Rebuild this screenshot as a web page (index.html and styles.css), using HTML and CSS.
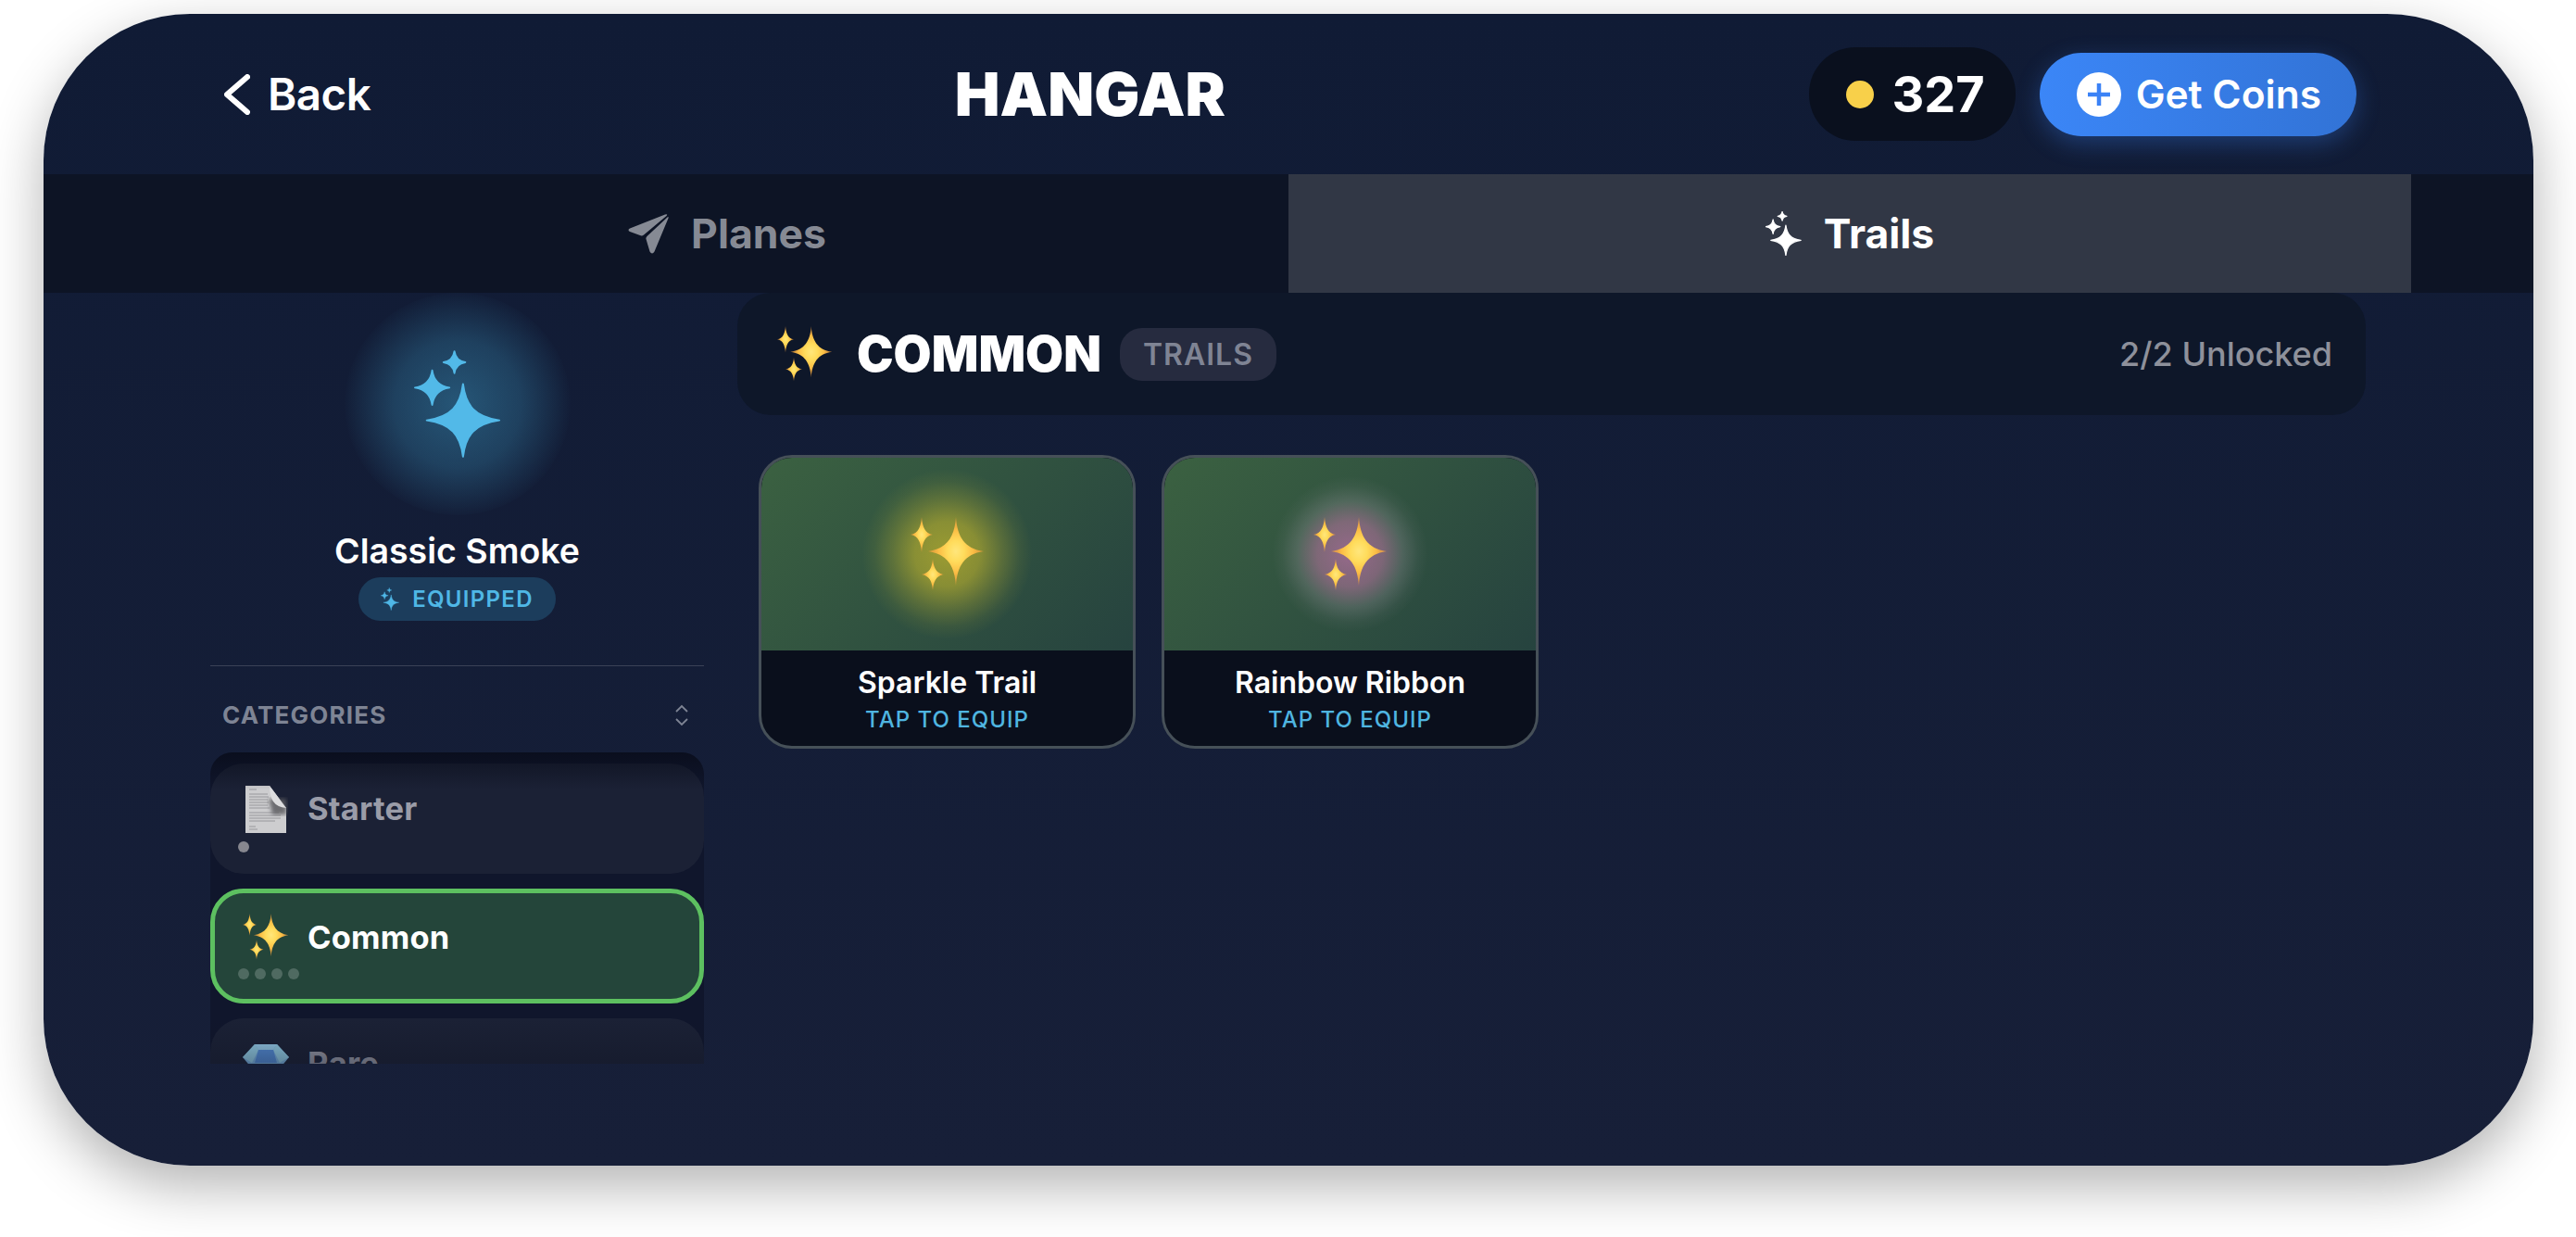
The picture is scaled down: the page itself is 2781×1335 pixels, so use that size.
FILE: index.html
```html
<!DOCTYPE html>
<html lang="en">

<head>
  <meta charset="UTF-8">
  <meta name="viewport" content="width=device-width, initial-scale=1.0">
  <title>Hangar</title>

  <link rel="stylesheet" href="styles.css">
</head>

<body>
  <svg class="defs" aria-hidden="true">
    <defs>
      <radialGradient id="gold">
        <stop offset="0" stop-color="#ffe67c" />
        <stop offset="0.3" stop-color="#ffdc5c" />
        <stop offset="0.62" stop-color="#fbbd45" />
        <stop offset="1" stop-color="#f39a3c" stop-opacity="0.65" />
      </radialGradient>
      <filter id="soft">
        <feGaussianBlur stdDeviation="2" />
      </filter>
      <symbol id="sparkles" viewBox="-1 -1 96 118">
        <path d="M53 36C56 60 66 72 93 76C66 80 56 92 53 116C50 92 40 80 13 76C40 72 50 60 53 36Z" />
        <path d="M19 21C20.5 32 26 38 38 40C26 42 20.5 48 19 59C17.5 48 12 42 0 40C12 38 17.5 32 19 21Z" />
        <path d="M43.5 0C44.5 7 48 11 55.5 12C48 13 44.5 17 43.5 24C42.5 17 39 13 31.5 12C39 11 42.5 7 43.5 0Z" />
      </symbol>
      <symbol id="emoji-sparkles" viewBox="0 0 80 80">
        <path fill="url(#gold)" d="M49 0C50.5 21 58 34 79 37C58 40 50.5 53 49 74C47.5 53 40 40 19 37C40 34 47.5 21 49 0Z" />
        <path fill="url(#gold)" d="M12 0C13 11 15.500 17.500 24 19C15.500 20.500 13 27 12 38C11 27 8.500 20.500 0 19C8.500 17.500 11 11 12 0Z" />
        <path fill="url(#gold)" d="M24 45C25 55 27.500 60.500 36 62C27.500 63.500 25 69 24 79C23 69 20.500 63.500 12 62C20.500 60.500 23 55 24 45Z" />
      </symbol>
    </defs>
  </svg>

  <div class="device">
    <header class="topbar">
      <a class="back">
        <svg class="back-icon" viewBox="0 0 28 44">
          <path d="M25 3L3 22L25 41" />
        </svg>
        Back
      </a>
      <h1>HANGAR</h1>
      <div class="wallet">
        <div class="coins">
          <span class="coin-dot"></span>
          327
        </div>
        <button class="get-coins">
          <svg class="plus-icon" viewBox="0 0 48 48">
            <circle cx="24" cy="24" r="24" fill="#fff" />
            <path d="M24 12V36M12 24H36" />
          </svg>
          Get Coins
        </button>
      </div>
    </header>

    <nav class="tabs">
      <a class="tab">
        <svg class="plane-icon" viewBox="0 0 44 44">
          <path d="M40 1.500Q43.500 .5 41.500 3L17 23.500Q15 25 13 24L2 20Q-1 18 2 16.500Z" />
          <path d="M42.500 4.500Q44 3 43.500 5.500L28.500 41.500Q26 45.500 23.500 41.500L19.500 28Q19 26.500 20.500 25Z" />
        </svg>
        Planes
      </a>
      <a class="tab active">
        <svg class="tab-sparkles">
          <use href="#sparkles" />
        </svg>
        Trails
      </a>
    </nav>

    <div class="content">
      <aside class="sidebar">
        <div class="preview">
          <svg class="preview-sparkles">
            <use href="#sparkles" />
          </svg>
        </div>
        <div class="equipped-name">Classic Smoke</div>
        <div class="equipped-badge">
          <svg class="badge-sparkles">
            <use href="#sparkles" />
          </svg>
          EQUIPPED
        </div>

        <div class="categories-head">
          <span>CATEGORIES</span>
          <svg class="updown" viewBox="0 0 16 24">
            <path d="M2 8L8 2L14 8M2 16L8 22L14 16" />
          </svg>
        </div>

        <div class="category-list">
          <div class="category">
            <div class="category-row">
              <svg class="doc-icon" viewBox="0 0 44 51">
                <path d="M0 0H26L44 24V51H0Z" fill="#cdcdcf" />
                <path d="M4 4H12M4 9H24M4 12H25M4 15H24M4 18H25M4 21H24M4 24H26M4 29H36M4 32H38M4 35H38M4 38H32M4 44H11M4 47H13" stroke="#98989c" stroke-width="1" />
                <path d="M25 14H44V31H29Z" fill="#5c5c60" opacity="0.85" filter="url(#soft)" />
                <path d="M26 0L44 24Q34 23 30 17Q26 11 26 0Z" fill="#dcdcde" />
              </svg>
              <span>Starter</span>
            </div>
            <div class="dots">
              <i></i>
            </div>
          </div>

          <div class="category selected">
            <div class="category-row">
              <svg class="list-sparkles">
                <use href="#emoji-sparkles" />
              </svg>
              <span>Common</span>
            </div>
            <div class="dots">
              <i></i><i></i><i></i><i></i>
            </div>
          </div>

          <div class="category">
            <div class="category-row">
              <svg class="gem-icon" viewBox="0 0 50 44">
                <path d="M13 0H37L50 14L25 44L0 14Z" fill="#7cb6e4" />
                <path d="M13 0L17 6H33L37 0Z" fill="#9ad2f0" />
                <path d="M13 0L0 14L10 20L17 6ZM37 0L50 14L40 20L33 6Z" fill="#96d2ea" />
                <path d="M17 6H33L37 20H13Z" fill="#558fda" />
              </svg>
              <span>Rare</span>
            </div>
          </div>
        </div>
      </aside>

      <main class="main">
        <div class="section-head">
          <svg class="section-sparkles">
            <use href="#emoji-sparkles" />
          </svg>
          <h2>COMMON</h2>
          <span class="section-tag">TRAILS</span>
          <span class="section-count">2/2 Unlocked</span>
        </div>

        <div class="cards">
          <div class="card">
            <div class="card-art glow-yellow">
              <svg class="card-sparkles">
                <use href="#emoji-sparkles" />
              </svg>
            </div>
            <div class="card-info">
              <div class="card-name">Sparkle Trail</div>
              <div class="card-action">TAP TO EQUIP</div>
            </div>
          </div>

          <div class="card">
            <div class="card-art glow-pink">
              <svg class="card-sparkles">
                <use href="#emoji-sparkles" />
              </svg>
            </div>
            <div class="card-info">
              <div class="card-name">Rainbow Ribbon</div>
              <div class="card-action">TAP TO EQUIP</div>
            </div>
          </div>
        </div>
      </main>
    </div>
  </div>
</body>

</html>
```

FILE: styles.css
```css
* {
  box-sizing: border-box;
}

html,
body {
  margin: 0;
  padding: 0;
  height: 100%;
  background-color: #fff;
  font-family: 'Inter', 'Liberation Sans', sans-serif;
}

body {
  overflow: hidden;
  padding: 15px 0 0 47px;
}

.defs {
  position: absolute;
  width: 0;
  height: 0;
}

.device {
  display: flex;
  flex-direction: column;

  width: 2688px;
  height: 1243px;

  overflow: hidden;
  border-radius: 158px;
  background: linear-gradient(180deg, #101b35 0%, #171f38 100%);
  box-shadow: 0 22px 60px rgba(0, 0, 0, 0.3);
  color: #fff;
}

/* top bar */

.topbar {
  display: flex;
  justify-content: space-between;
  align-items: center;

  height: 173px;
  flex-shrink: 0;
  padding: 0 191px 0 195px;
}

.back {
  display: flex;
  align-items: center;
  gap: 19px;

  font-size: 47.500px;
  font-weight: 600;
  letter-spacing: -0.5px;
}

.back-icon {
  width: 28px;
  height: 44px;
  fill: none;
  stroke: #fff;
  stroke-width: 6;
  stroke-linecap: round;
  stroke-linejoin: round;
}

h1 {
  margin: 0;
  font-size: 65px;
  font-weight: 900;
}

.wallet {
  display: flex;
  align-items: center;
  gap: 26px;
}

.coins {
  display: flex;
  align-items: center;
  gap: 19px;

  height: 101px;
  padding: 0 33px 0 40px;

  border-radius: 50px;
  background-color: #0a101e;

  font-size: 54px;
  font-weight: 700;
}

.coin-dot {
  width: 30px;
  height: 30px;
  border-radius: 50%;
  background-color: #f8d04a;
}

.get-coins {
  display: flex;
  align-items: center;
  gap: 16px;

  height: 90px;
  padding: 0 38px 0 40px;

  border: none;
  border-radius: 45px;
  background: linear-gradient(90deg, #3b86f7 0%, #3273d6 100%);
  box-shadow: 0 8px 26px rgba(59, 130, 246, 0.32);

  color: #fff;
  font-family: inherit;
  font-size: 42.500px;
  font-weight: 600;
}

.plus-icon {
  width: 48px;
  height: 48px;
}

.plus-icon path {
  fill: none;
  stroke: #3b82f6;
  stroke-width: 4.5;
}

/* tabs */

.tabs {
  display: flex;
  flex-shrink: 0;

  height: 128px;
  padding: 0 132px;
  background-color: #0d1425;
}

.tab {
  flex: 1;

  display: flex;
  justify-content: center;
  align-items: center;
  gap: 24px;

  color: #868a94;
  font-size: 44.500px;
  font-weight: 700;
}

.tab.active {
  background-color: #313745;
  color: #fff;
}

.plane-icon {
  width: 44px;
  height: 44px;
  fill: #868a94;
}

.tab-sparkles {
  width: 39px;
  height: 48px;
  fill: #fff;
  stroke: #fff;
  stroke-width: 3;
  stroke-linejoin: round;
}

/* sidebar */

.content {
  flex: 1;
  display: flex;
  gap: 36px;
  padding: 0 181px 0 180px;
  min-height: 0;
}

.sidebar {
  display: flex;
  flex-direction: column;
  align-items: center;

  width: 533px;
  flex-shrink: 0;
}

.preview {
  display: flex;
  justify-content: center;
  align-items: center;

  width: 244px;
  height: 240px;
  flex-shrink: 0;

  border-radius: 50%;
  background: radial-gradient(circle, rgba(70, 180, 225, 0.38) 0%, rgba(70, 180, 225, 0.24) 40%, rgba(70, 180, 225, 0) 72%);
}

.preview-sparkles {
  width: 94px;
  height: 116px;
  fill: #52b9e8;
  stroke: #52b9e8;
  stroke-width: 2;
  stroke-linejoin: round;
}

.equipped-name {
  margin-top: 16px;
  font-size: 37.500px;
  line-height: 46px;
  font-weight: 600;
}

.equipped-badge {
  display: flex;
  align-items: center;
  gap: 14px;

  width: 213px;
  justify-content: center;

  height: 47px;
  margin-top: 5px;

  border-radius: 24px;
  background-color: #1c3d5c;

  color: #4fb7e6;
  font-size: 24px;
  font-weight: 600;
  letter-spacing: 1.300px;
}

.badge-sparkles {
  width: 20px;
  height: 25px;
  fill: #4fb7e6;
  stroke: #4fb7e6;
  stroke-width: 2;
}

.categories-head {
  display: flex;
  justify-content: space-between;
  align-items: center;

  width: 100%;
  margin-top: 48px;
  padding: 36px 16px 23px 13px;
  border-top: 1px solid #3b4256;

  color: #7e8494;
  font-size: 26px;
  line-height: 34px;
  font-weight: 700;
  letter-spacing: 1.200px;
}

.updown {
  width: 16px;
  height: 24px;
  fill: none;
  stroke: #7e8494;
  stroke-width: 1.800;
}

.category-list {
  position: relative;

  display: flex;
  flex-direction: column;
  gap: 16px;

  width: 100%;
  height: 336px;
  padding-top: 12px;
  flex-shrink: 0;

  overflow: hidden;
  border-radius: 24px 24px 0 0;
  background-color: #10162c;
}

.category-list::before {
  content: "";
  position: absolute;
  z-index: 1;
  top: 0;
  left: 0;
  right: 0;
  height: 40px;
  background: linear-gradient(180deg, rgba(6, 9, 20, 0.6), rgba(6, 9, 20, 0));
}

.category-list::after {
  content: "";
  position: absolute;
  z-index: 1;
  bottom: 0;
  left: 0;
  right: 0;
  height: 48px;
  background: linear-gradient(180deg, rgba(16, 20, 36, 0), rgba(16, 20, 36, 0.4));
}

.category {
  flex-shrink: 0;

  width: 100%;
  height: 119px;
  padding: 18px 30px 0;

  border-radius: 36px;
  background-color: #1b2135;
  color: #9a9ca8;
}

.category.selected {
  height: 124px;
  padding: 17px 25px 0;

  border: 5px solid #5dc060;
  background-color: #24453a;
  color: #fff;
}

.category-row {
  display: flex;
  align-items: center;
  gap: 15px;

  height: 60px;

  font-size: 34.500px;
  font-weight: 700;
}

.category-row span {
  letter-spacing: 0.2px;
}

.category-row svg {
  flex-shrink: 0;
}

.doc-icon {
  width: 60px;
  height: 51px;
  margin-top: 3px;
}

.list-sparkles {
  width: 60px;
  height: 50px;
}

.gem-icon {
  width: 60px;
  height: 44px;
  align-self: flex-start;
  margin-top: 10px;
}

.dots {
  display: flex;
  gap: 6px;
  margin-top: 6px;
}

.dots i {
  width: 12px;
  height: 12px;
  border-radius: 50%;
  background-color: #87878f;
}

.selected .dots {
  margin-top: 4px;
}

.selected .dots i {
  background-color: rgba(255, 255, 255, 0.2);
}

/* main */

.main {
  flex: 1;
  min-width: 0;
}

.section-head {
  display: flex;
  align-items: center;

  height: 132px;
  padding: 0 36px 0 43px;

  border-radius: 36px;
  background-color: #0e1729;
}

.section-sparkles {
  width: 60px;
  height: 60px;
  flex-shrink: 0;
}

h2 {
  margin: 0 20px 0 26px;
  font-size: 53px;
  font-weight: 900;
}

.section-tag {
  display: flex;
  align-items: center;

  height: 57px;
  padding: 0 25px;

  border-radius: 24px;
  background-color: #262b3f;

  color: #7f8494;
  font-size: 32px;
  font-weight: 600;
  letter-spacing: 1px;
}

.section-count {
  margin-left: auto;
  color: #8e919b;
  font-size: 36px;
  font-weight: 500;
}

.cards {
  display: flex;
  gap: 28px;
  padding: 43px 23px 0;
}

.card {
  width: 407px;
  height: 317px;

  overflow: hidden;
  border: 3px solid #465058;
  border-radius: 36px;
  background-color: #0a0f1c;
}

.card-art {
  display: flex;
  justify-content: center;
  align-items: center;

  height: 208px;
}

.glow-yellow {
  background:
    radial-gradient(circle 92px at 50% 50%, rgba(232, 208, 40, 0.58) 0%, rgba(232, 208, 40, 0.48) 38%, rgba(232, 208, 40, 0.24) 64%, rgba(232, 208, 40, 0.07) 85%, rgba(232, 208, 40, 0) 100%),
    linear-gradient(135deg, #3b6141 0%, #26433f 100%);
}

.glow-pink {
  background:
    radial-gradient(circle 84px at 50% 50%, rgba(233, 124, 199, 0.55) 0%, rgba(225, 130, 190, 0.44) 42%, rgba(190, 170, 190, 0.22) 68%, rgba(190, 170, 190, 0.06) 87%, rgba(190, 170, 190, 0) 100%),
    linear-gradient(135deg, #3b6141 0%, #26433f 100%);
}

.card-sparkles {
  width: 80px;
  height: 80px;
}

.card-info {
  padding-top: 16px;
  text-align: center;
}

.card-name {
  font-size: 32px;
  line-height: 38px;
  font-weight: 600;
}

.card-action {
  margin-top: 6px;
  color: #4fb5e0;
  font-size: 24px;
  line-height: 30px;
  font-weight: 500;
  letter-spacing: 1px;
}
```
